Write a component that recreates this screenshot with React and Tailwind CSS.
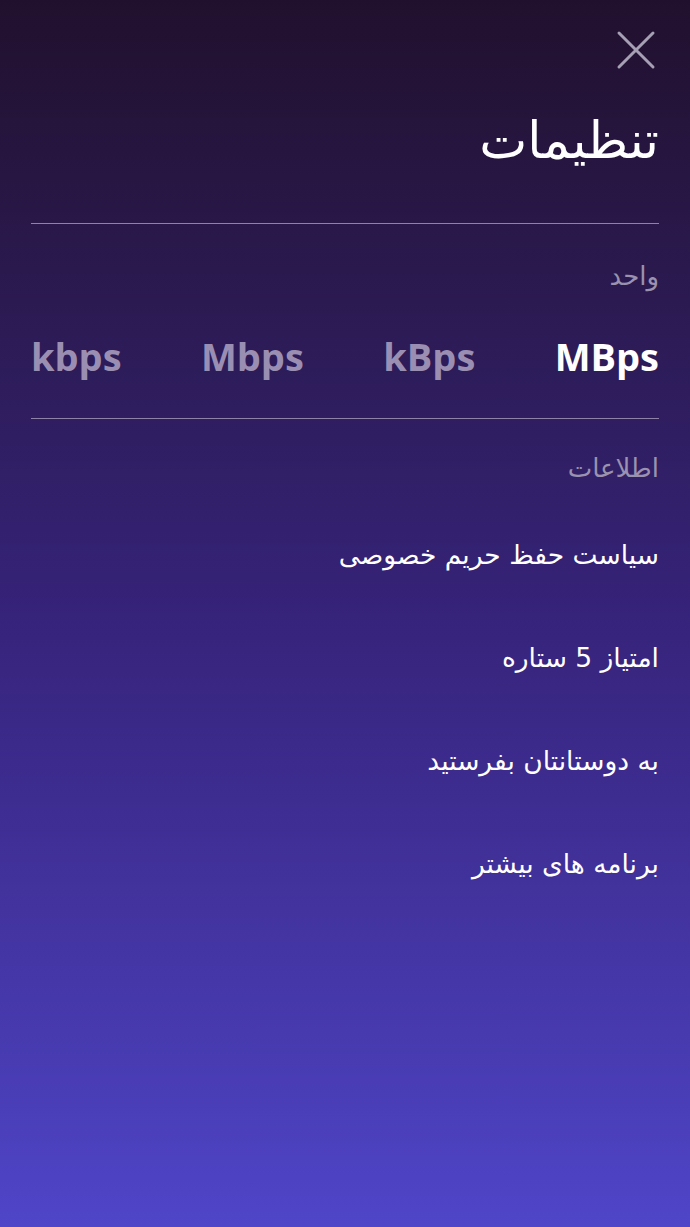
import React from "react";

export default function App() {
  const fa = { fontFamily: '"DejaVu Sans", "Noto Sans", sans-serif' };
  const items = [
    "سیاست حفظ حریم خصوصی",
    "امتیاز 5 ستاره",
    "به دوستانتان بفرستید",
    "برنامه های بیشتر",
  ];
  return (
    <div className="w-[690px] h-[1227px] bg-gradient-to-b from-[#21102d] via-[#36237a] to-[#4f45c8] overflow-hidden">
      <div dir="rtl" className="px-[31px] pt-[30px] flex flex-col" style={fa}>
        <div className="flex justify-start pr-[3px]">
          <svg width="40" height="40" viewBox="0 0 40 40" className="text-[#a6a0b4]">
            <path d="M3 3 L37 37 M37 3 L3 37" stroke="currentColor" strokeWidth="3" strokeLinecap="round" fill="none" />
          </svg>
        </div>
        <h1 className="mt-[39px] text-[51px] leading-[64px] text-white font-normal">تنظیمات</h1>
        <div className="mt-[50px] h-px bg-[#8e82a8]" />
        <div className="mt-[35px] text-[26px] leading-[34px] text-[#9a92ae]">واحد</div>
        <div
          dir="ltr"
          className="mt-[38px] flex justify-between items-center text-[38px] leading-[50px] font-bold"
          style={{ fontFamily: '"Open Sans", "Noto Sans", sans-serif' }}
        >
          <span className="text-[#9a8fb3]">kbps</span>
          <span className="text-[#9a8fb3]">Mbps</span>
          <span className="text-[#9a8fb3]">kBps</span>
          <span className="text-white">MBps</span>
        </div>
        <div className="mt-[37px] h-px bg-[#8e82a8]" />
        <div className="mt-[32px] text-[26px] leading-[34px] text-[#9a92ae]">اطلاعات</div>
        <div className="mt-[52px] flex flex-col gap-[67px]">
          {items.map((t) => (
            <div key={t} className="text-[26.5px] leading-[36px] text-white">
              {t}
            </div>
          ))}
        </div>
      </div>
    </div>
  );
}
